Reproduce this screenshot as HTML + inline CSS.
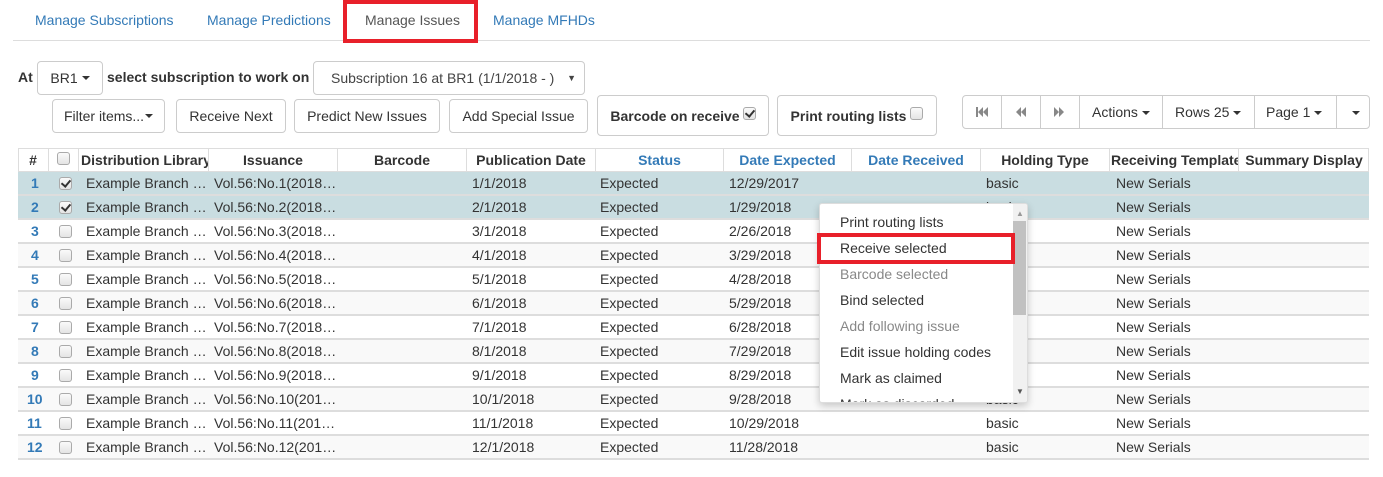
<!DOCTYPE html>
<html><head><meta charset="utf-8"><style>
*{box-sizing:border-box}
body{margin:0;width:1383px;height:477px;background:#fff;font-family:"Liberation Sans",Arial,sans-serif;font-size:14px;color:#333;position:relative;overflow:hidden}
.a{position:absolute;white-space:nowrap}
.tab{position:absolute;top:12px;color:#337ab7;font-size:14px}
.btn{position:absolute;border:1px solid #ccc;border-radius:4px;background:#fff;display:flex;align-items:center;justify-content:center;color:#333;font-size:14px}
.caret{display:inline-block;width:0;height:0;border-left:4px solid transparent;border-right:4px solid transparent;border-top:4px solid #333;margin-left:4px;vertical-align:middle}
.cb{position:absolute;width:13px;height:13px;border:1px solid #aaa;border-radius:3px;background:linear-gradient(#fafafa,#e4e4e4)}
.cb.c::after{content:"";position:absolute;left:3px;top:0px;width:4px;height:7px;border:solid #333;border-width:0 2px 2px 0;transform:rotate(40deg)}
.row{position:absolute;left:18px;width:1351px;height:24px;border-bottom:2px solid #ddd}
.row .a{top:3px}
.th{position:absolute;top:148px;height:24px;border-right:1px solid #ddd;font-weight:bold;text-align:center;line-height:24px;font-size:14px;overflow:hidden;white-space:nowrap}
.blue{color:#337ab7}
.mi{position:absolute;left:840px;font-size:14px;color:#333}
.dis{color:#888}
</style></head><body>
<div class="tab" style="left:35px">Manage Subscriptions</div>
<div class="tab" style="left:207px">Manage Predictions</div>
<div class="tab" style="left:365px;color:#555">Manage Issues</div>
<div class="tab" style="left:493px">Manage MFHDs</div>
<div class="a" style="left:13px;top:40px;width:1357px;height:1px;background:#ddd"></div>
<div class="a" style="left:343px;top:0;width:135px;height:43px;border:4px solid #e8202a"></div>

<div class="a" style="left:18px;top:69px;font-weight:bold">At</div>
<div class="btn" style="left:37px;top:61px;width:66px;height:34px">BR1<span class="caret"></span></div>
<div class="a" style="left:107px;top:69px;font-weight:bold">select subscription to work on</div>
<div class="btn" style="left:313px;top:61px;width:272px;height:34px;justify-content:flex-start;padding-left:17px;color:#444">Subscription 16 at BR1 (1/1/2018 - )<span style="position:absolute;right:8px;font-size:9px">▼</span></div>

<div class="btn" style="left:52px;top:99px;width:113px;height:34px">Filter items...<span class="caret" style="margin-left:1px"></span></div>
<div class="btn" style="left:176px;top:99px;width:110px;height:34px">Receive Next</div>
<div class="btn" style="left:294px;top:99px;width:146px;height:34px">Predict New Issues</div>
<div class="btn" style="left:449px;top:99px;width:139px;height:34px">Add Special Issue</div>
<div class="btn" style="left:597px;top:95px;width:172px;height:41px;font-weight:bold">Barcode on receive<span class="cb c" style="position:relative;margin-left:3px;top:-2px"></span></div>
<div class="btn" style="left:777px;top:95px;width:160px;height:41px;font-weight:bold">Print routing lists<span class="cb" style="position:relative;margin-left:4px;top:-2px"></span></div>

<div class="a" style="left:962px;top:95px;width:408px;height:34px;border:1px solid #ccc;border-radius:4px"></div>
<div class="a" style="left:1001px;top:96px;width:1px;height:32px;background:#ccc"></div>
<div class="a" style="left:1040px;top:96px;width:1px;height:32px;background:#ccc"></div>
<div class="a" style="left:1079px;top:96px;width:1px;height:32px;background:#ccc"></div>
<div class="a" style="left:1162px;top:96px;width:1px;height:32px;background:#ccc"></div>
<div class="a" style="left:1254px;top:96px;width:1px;height:32px;background:#ccc"></div>
<div class="a" style="left:1336px;top:96px;width:1px;height:32px;background:#ccc"></div>
<svg class="a" style="left:975px;top:106px" width="16" height="12"><rect x="1" y="1" width="2" height="10" fill="#888"/><path d="M3 6L8 1V11Z M8 6L13 1V11Z" fill="#888"/></svg>
<svg class="a" style="left:1014px;top:106px" width="16" height="12"><path d="M2 6L7 1V11Z M7 6L12 1V11Z" fill="#888"/></svg>
<svg class="a" style="left:1052px;top:106px" width="16" height="12"><path d="M2 1L7 6L2 11Z M7 1L12 6L7 11Z" fill="#888"/></svg>
<div class="a" style="left:1092px;top:104px">Actions<span class="caret"></span></div>
<div class="a" style="left:1175px;top:104px">Rows 25<span class="caret"></span></div>
<div class="a" style="left:1266px;top:104px">Page 1<span class="caret"></span></div>
<div class="a" style="left:1348px;top:104px"><span class="caret"></span></div>

<div class="a" style="left:18px;top:148px;width:1351px;height:312px;border:1px solid #ddd"></div>
<div class="th" style="left:18px;width:31px">#</div>
<div class="th" style="left:49px;width:30px"><span class="cb" style="left:8px;top:4px"></span></div>
<div class="th" style="left:79px;width:130px;text-align:left;padding-left:2px">Distribution Library</div>
<div class="th" style="left:209px;width:129px">Issuance</div>
<div class="th" style="left:338px;width:129px">Barcode</div>
<div class="th" style="left:467px;width:129px">Publication Date</div>
<div class="th blue" style="left:596px;width:128px">Status</div>
<div class="th blue" style="left:724px;width:128px">Date Expected</div>
<div class="th blue" style="left:852px;width:129px">Date Received</div>
<div class="th" style="left:981px;width:129px">Holding Type</div>
<div class="th" style="left:1110px;width:129px;text-align:left;padding-left:1px">Receiving Template</div>
<div class="th" style="left:1239px;width:130px;border-right:none">Summary Display</div>
<div class="a" style="left:18px;top:171px;width:1351px;height:2px;background:#ddd"></div>

<div id="rows"></div>
<script>
(function(){
var exp=["12/29/2017","1/29/2018","2/26/2018","3/29/2018","4/28/2018","5/29/2018","6/28/2018","7/29/2018","8/29/2018","9/28/2018","10/29/2018","11/28/2018"];
var h="";
for(var i=1;i<=12;i++){
 var ty=172+(i-1)*24;
 var bg=i<=2?"#c9dde1":(i%2==0?"#f9f9f9":"#fff");
 var iss=i<10?"Vol.56:No."+i+"(2018…":"Vol.56:No."+i+"(201…";
 h+='<div class="row" style="top:'+ty+'px;background:'+bg+'">'+
 '<div class="a blue" style="left:'+(i<10?13:9)+'px;font-weight:bold">'+i+'</div>'+
 '<span class="cb'+(i<=2?' c':'')+'" style="left:41px;top:5px"></span>'+
 '<div class="a" style="left:68px">Example Branch …</div>'+
 '<div class="a" style="left:196px">'+iss+'</div>'+
 '<div class="a" style="left:454px">'+i+'/1/2018</div>'+
 '<div class="a" style="left:582px">Expected</div>'+
 '<div class="a" style="left:711px">'+exp[i-1]+'</div>'+
 '<div class="a" style="left:968px">basic</div>'+
 '<div class="a" style="left:1098px">New Serials</div></div>';
}
document.getElementById("rows").innerHTML=h;
})();
</script>

<div class="a" style="left:819px;top:203px;width:209px;height:200px;background:#fff;border:1px solid #ddd;border-radius:3px;box-shadow:0 3px 8px rgba(0,0,0,.2);overflow:hidden">
<div class="a" style="left:193px;top:0;width:15px;height:198px;background:#f1f1f1"></div>
<div class="a" style="left:193px;top:17px;width:13px;height:94px;background:#c1c1c1"></div>
<div class="a" style="left:196px;top:5px;font-size:8px;color:#999">▲</div>
<div class="a" style="left:196px;top:183px;font-size:8px;color:#555">▼</div>
</div>
<div class="mi" style="top:214px">Print routing lists</div>
<div class="mi" style="top:240px">Receive selected</div>
<div class="mi dis" style="top:266px">Barcode selected</div>
<div class="mi" style="top:292px">Bind selected</div>
<div class="mi dis" style="top:318px">Add following issue</div>
<div class="mi" style="top:344px">Edit issue holding codes</div>
<div class="mi" style="top:370px">Mark as claimed</div>
<div class="a" style="left:840px;top:396px;height:6px;overflow:hidden;width:170px"><span style="position:relative;top:0">Mark as discarded</span></div>
<div class="a" style="left:817px;top:233px;width:198px;height:31px;border:4px solid #e8202a"></div>
</body></html>
